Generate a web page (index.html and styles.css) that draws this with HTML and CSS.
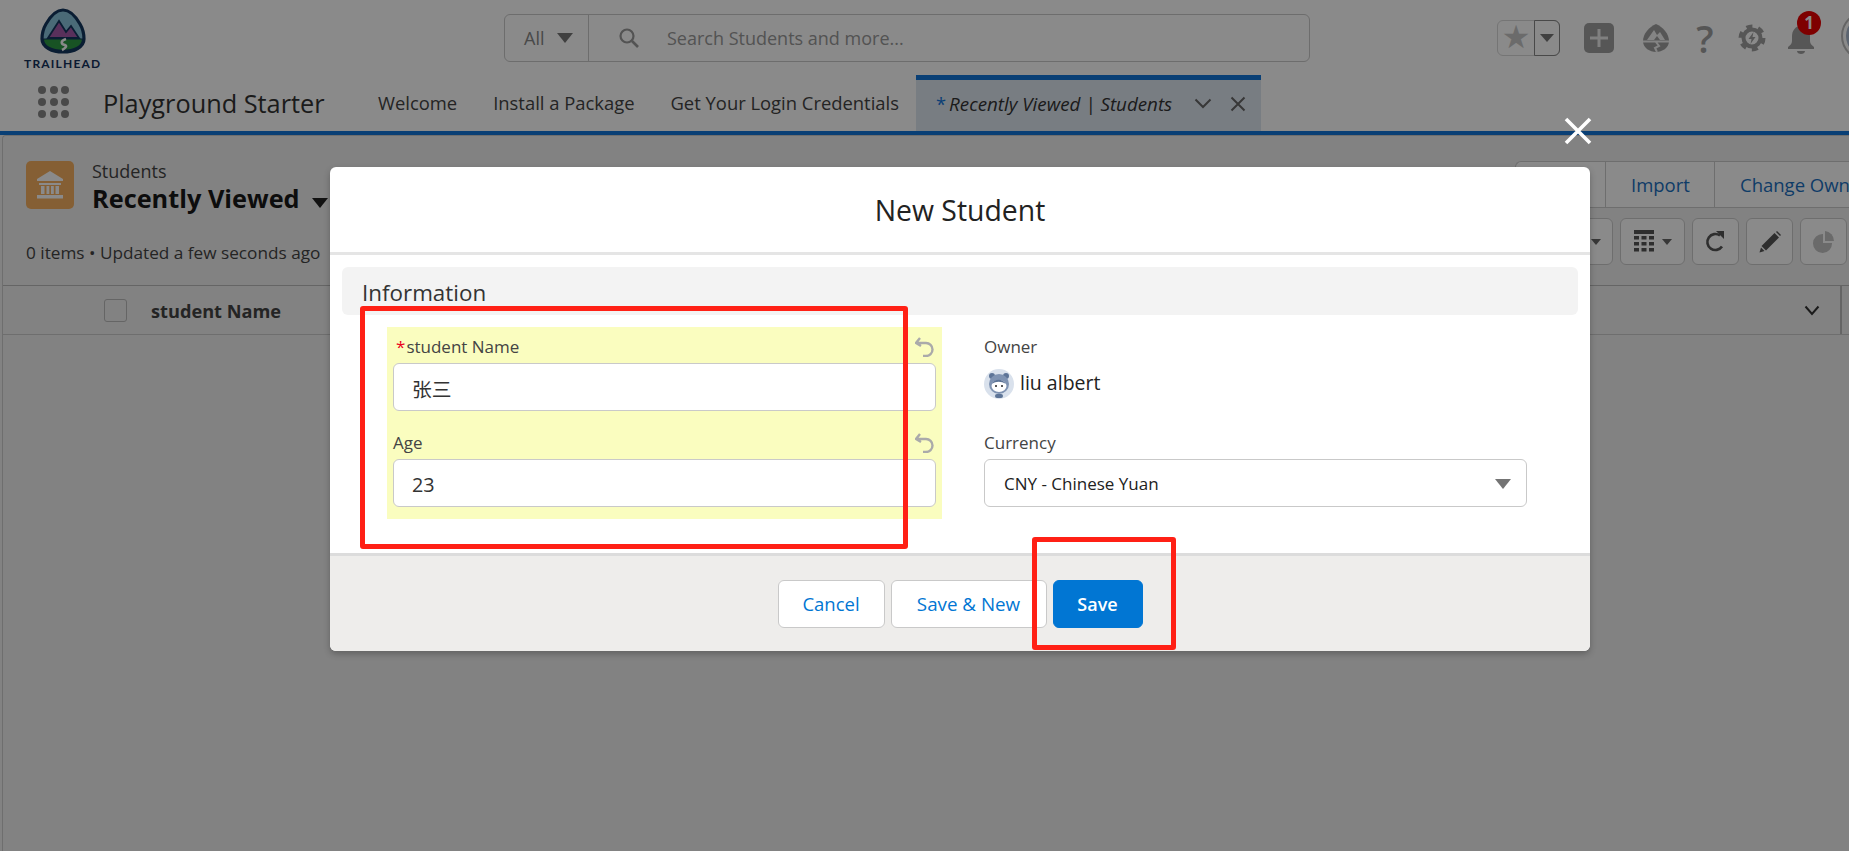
FILE: index.html
```html
<!DOCTYPE html>
<html lang="en">
<head>
  <meta charset="UTF-8">
  <title>New Student</title>
  <link rel="stylesheet" href="styles.css">
</head>
<body>
  <header class="topbar">
    <div class="logo">
      <svg width="46" height="46" viewBox="0 0 46 46">
        <path d="M23 2C30 2 36 9 40 16C43 21 44 26 44 31C44 39 34 44 23 44C12 44 2 39 2 31C2 26 3 21 6 16C10 9 16 2 23 2Z" fill="#8ac4dc" stroke="#14375e" stroke-width="3.200"/>
        <path d="M8 30L19 13L26 24L31 18L39 30Z" fill="#a45aa8" stroke="#14375e" stroke-width="1.800"/>
        <path d="M3.500 31H42.500C43 38 34 42.500 23 42.500C12 42.500 3 38 3.500 31Z" fill="#2e9a44" stroke="#14375e" stroke-width="1.200"/>
        <path d="M26 31C20 33 21 36 25 37C28 38 24 41 22 42" fill="none" stroke="#fff" stroke-width="2.600"/>
      </svg>
      <span class="logo-text">TRAILHEAD</span>
    </div>
    <div class="search">
      <div class="search-scope">All <span class="caret"></span></div>
      <svg class="search-icon" width="22" height="22" viewBox="0 0 22 22"><circle cx="9" cy="9" r="6.500" fill="none" stroke="#999" stroke-width="2.200"/><path d="M14 14L20 20" stroke="#999" stroke-width="2.600"/></svg>
      <span class="search-text">Search Students and more...</span>
    </div>
    <div class="global-actions">
      <div class="fav">
        <span class="fav-star">★</span>
        <span class="fav-menu"><span class="caret"></span></span>
      </div>
      <span class="add-btn">
        <svg width="20" height="20" viewBox="0 0 20 20"><path d="M10 1V19M1 10H19" stroke="#fff" stroke-width="3" opacity=".8"/></svg>
      </span>
      <svg class="g-trail" width="28" height="30" viewBox="0 0 28 30">
        <path d="M14 1C21 4 27 11 27 18C27 25 20 29 14 29C8 29 1 25 1 18C1 11 7 4 14 1Z" fill="#a0a0a0"/>
        <path d="M5 17L12 7L15 12L18 9L23 17H18L15 13L12 17Z" fill="#f4f4f4"/>
        <path d="M1 18.500H27M14 19L17 23L13 25L15 29" fill="none" stroke="#f4f4f4" stroke-width="2"/>
      </svg>
      <span class="g-help">?</span>
      <svg class="g-gear" width="28" height="28" viewBox="0 0 28 28">
        <circle cx="14" cy="14" r="11" fill="none" stroke="#a0a0a0" stroke-width="5" stroke-dasharray="5.800 5.720"/>
        <circle cx="14" cy="14" r="8.500" fill="none" stroke="#a0a0a0" stroke-width="4"/>
        <path d="M15.500 8L10.500 15H13.500L12.500 20L17.500 13H14.500Z" fill="#a0a0a0"/>
      </svg>
      <span class="g-bell">
        <svg width="30" height="30" viewBox="0 0 30 30"><path d="M15 2C9 2 6 7 6 12V17C6 20 4 21 2 23V25H28V23C26 21 24 20 24 17V12C24 7 21 2 15 2Z" fill="#a0a0a0"/><path d="M11 27H19C19 29 17 30 15 30C13 30 11 29 11 27Z" fill="#a0a0a0"/></svg>
        <span class="badge">1</span>
      </span>
      <span class="g-avatar"><span class="g-avatar-img"></span></span>
    </div>
  </header>

  <nav class="navbar">
    <div class="waffle">
      <i></i><i></i><i></i><i></i><i></i><i></i><i></i><i></i><i></i>
    </div>
    <div class="app-name">Playground Starter</div>
    <a class="tab">Welcome</a>
    <a class="tab">Install a Package</a>
    <a class="tab">Get Your Login Credentials</a>
    <div class="tab tab-active">
      <span class="tab-mark">*</span>
      <em class="tab-label">Recently Viewed | Students</em>
      <svg width="18" height="11" viewBox="0 0 18 11"><path d="M1.500 1.500L9 9L16.500 1.500" fill="none" stroke="#666" stroke-width="2"/></svg>
      <svg width="16" height="16" viewBox="0 0 16 16"><path d="M1.500 1.500L14.500 14.500M14.500 1.500L1.500 14.500" stroke="#666" stroke-width="2"/></svg>
    </div>
  </nav>

  <main class="panel">
    <div class="list-head">
      <span class="object-icon">
        <svg width="32" height="32" viewBox="0 0 32 32" fill="#fff"><path d="M16 2L29 10V12H3V10Z"/><rect x="5" y="14" width="22" height="2"/><rect x="7" y="17" width="3.500" height="8"/><rect x="12.500" y="17" width="2.800" height="8"/><rect x="17" y="17" width="2.800" height="8"/><rect x="21.500" y="17" width="3.500" height="8"/><rect x="3" y="26" width="26" height="3.500"/></svg>
      </span>
      <div class="list-title">
        <div class="object-name">Students</div>
        <div class="view-name">Recently Viewed <span class="caret caret-dark"></span></div>
      </div>
      <div class="btn-group">
        <a class="group-btn group-new">New</a>
        <a class="group-btn group-import">Import</a>
        <a class="group-btn">Change Owner</a>
      </div>
    </div>

    <div class="list-tools">
      <span class="list-meta">0 items • Updated a few seconds ago</span>
      <div class="tool-row">
        <span class="tool tool-wide tool-settings"><span class="caret caret-small"></span></span>
        <span class="tool tool-wide">
          <svg width="20" height="24" viewBox="0 0 20 24" fill="#555"><rect width="20" height="4"/><rect y="6" width="5" height="3.500"/><rect x="7.500" y="6" width="5" height="3.500"/><rect x="15" y="6" width="5" height="3.500"/><rect y="12" width="5" height="3.500"/><rect x="7.500" y="12" width="5" height="3.500"/><rect x="15" y="12" width="5" height="3.500"/><rect y="18" width="5" height="3.500"/><rect x="7.500" y="18" width="5" height="3.500"/><rect x="15" y="18" width="5" height="3.500"/></svg>
          <span class="caret caret-small"></span>
        </span>
        <span class="tool">
          <svg width="22" height="22" viewBox="0 0 22 22"><path d="M17 15.500A8 8 0 1 1 15 4.500" fill="none" stroke="#555" stroke-width="2.600"/><path d="M11 0H19V8Z" fill="#555"/></svg>
        </span>
        <span class="tool">
          <svg width="22" height="22" viewBox="0 0 22 22" fill="#555"><path d="M15.500 2L20 6.500L7 19.500L2.500 15Z"/><path d="M2 16.500L5.500 20L0.500 21.500Z"/><path d="M17 1L18 0L22 4L21 5Z"/></svg>
        </span>
        <span class="tool">
          <svg width="22" height="22" viewBox="0 0 22 22"><path d="M10 3V12H19A9.500 9.500 0 1 1 10 3Z" fill="#c4c4c4"/><path d="M12 0A10 10 0 0 1 21 10H12Z" fill="#c4c4c4"/></svg>
        </span>
      </div>
    </div>

    <div class="table-head">
      <span class="check"></span>
      <span class="col-name">student Name</span>
      <svg class="col-chevron" width="16" height="11" viewBox="0 0 16 11"><path d="M1.500 1.500L8 9L14.500 1.500" fill="none" stroke="#333" stroke-width="2"/></svg>
      <span class="col-edge"></span>
    </div>
  </main>

  <div class="backdrop"></div>

  <svg class="modal-close" width="28" height="28" viewBox="0 0 28 28"><path d="M2 2L26 26M26 2L2 26" stroke="#fff" stroke-width="3.600"/></svg>

  <section class="modal">
    <div class="modal-head">New Student</div>
    <div class="modal-body">
      <div class="section-title">Information</div>
      <div class="form">
        <div class="form-col form-changed">
          <div class="field-label">
            <span class="label-req"><span class="req">*</span>student Name</span>
            <svg class="undo" width="20" height="20" viewBox="0 0 20 20"><path d="M5 1L1 6L6 9M2 6H11A6.500 6.500 0 0 1 11 19H8" fill="none" stroke="#aaa" stroke-width="2.400"/></svg>
          </div>
          <input class="text-input" type="text" value="张三">
          <div class="field-label field-next">
            <span>Age</span>
            <svg class="undo" width="20" height="20" viewBox="0 0 20 20"><path d="M5 1L1 6L6 9M2 6H11A6.500 6.500 0 0 1 11 19H8" fill="none" stroke="#aaa" stroke-width="2.400"/></svg>
          </div>
          <input class="text-input" type="text" value="23">
        </div>
        <div class="form-col">
          <div class="field-label">Owner</div>
          <div class="owner">
            <svg width="30" height="30" viewBox="0 0 30 30">
              <circle cx="15" cy="15" r="15" fill="#d9e1ec"/>
              <circle cx="8" cy="7" r="3" fill="#5d7497"/><circle cx="22" cy="7" r="3" fill="#5d7497"/>
              <circle cx="15" cy="15" r="10" fill="#7f93b2"/>
              <ellipse cx="15" cy="17" rx="7.500" ry="6" fill="#fff"/>
              <path d="M8 15C10 10 18 9 22 15C17 12 12 12 8 15Z" fill="#5d7497"/>
              <circle cx="12" cy="17" r="1" fill="#222"/><circle cx="18" cy="17" r="1" fill="#222"/>
              <rect x="11" y="25" width="8" height="4" rx="2" fill="#5d7497"/>
            </svg>
            <span>liu albert</span>
          </div>
          <div class="field-label field-currency">Currency</div>
          <div class="select-box">
            <span>CNY - Chinese Yuan</span>
            <span class="select-arrow"></span>
          </div>
        </div>
      </div>
    </div>
    <div class="modal-foot">
      <button class="btn btn-cancel" type="button">Cancel</button>
      <button class="btn btn-new" type="button">Save &amp; New</button>
      <button class="btn btn-brand" type="button">Save</button>
    </div>
  </section>

  <div class="mark mark-form"></div>
  <div class="mark mark-save"></div>
</body>
</html>
```

FILE: styles.css
```css
* {
  box-sizing: border-box;
}
html, body {
  height: 851px;
}
body {
  margin: 0;
  overflow: hidden;
  position: relative;
  background: #f1f1f1;
  font-family: "Open Sans", "Noto Sans CJK SC", sans-serif;
  font-size: 17px;
  color: #333;
}

/* triangles used all over the page */
.caret {
  display: inline-block;
  width: 0;
  height: 0;
  border-left: 8px solid transparent;
  border-right: 8px solid transparent;
  border-top: 10px solid #777;
}
.caret-dark {
  border-top-color: #222;
  margin-left: 6px;
}
.caret-small {
  border-left-width: 5px;
  border-right-width: 5px;
  border-top: 6px solid #666;
}

/* top bar */
.topbar {
  height: 70px;
  background: #fff;
  display: flex;
  align-items: flex-start;
}
.logo {
  width: 504px;
  padding: 8px 0 0 24px;
  flex: none;
}
.logo svg {
  display: block;
  margin-left: 16px;
}
.logo-text {
  display: block;
  width: 80px;
  margin-top: 3px;
  font-size: 12px;
  line-height: 14px;
  font-weight: 700;
  letter-spacing: 1.200px;
  color: #16325c;
  font-family: "Lato", sans-serif;
}
.search {
  width: 806px;
  height: 48px;
  margin-top: 14px;
  border: 1px solid #c9c9c9;
  border-radius: 6px;
  display: flex;
  align-items: center;
  flex: none;
}
.search-scope {
  width: 84px;
  height: 100%;
  padding-left: 19px;
  border-right: 1px solid #c9c9c9;
  display: flex;
  align-items: center;
  gap: 13px;
  color: #888;
  font-size: 18px;
}
.search-icon {
  margin-left: 29px;
}
.search-text {
  margin-left: 27px;
  color: #999;
  font-size: 18px;
}
.global-actions {
  margin-left: 187px;
  height: 70px;
  display: flex;
  align-items: flex-start;
  flex: none;
}
.fav {
  width: 63px;
  height: 36px;
  margin-top: 20px;
  border: 1px solid #d8d8d8;
  border-radius: 6px;
  display: flex;
}
.fav-star {
  width: 36px;
  text-align: center;
  color: #c6c6c6;
  font-size: 32px;
  line-height: 32px;
  font-family: "DejaVu Sans", sans-serif;
}
.fav-menu {
  flex: 1;
  margin: -1px -1px -1px 0;
  border: 1px solid #888;
  border-radius: 0 6px 6px 0;
  display: flex;
  align-items: center;
  justify-content: center;
}
.fav-menu .caret {
  border-left-width: 7px;
  border-right-width: 7px;
  border-top-width: 8px;
  border-top-color: #777;
}
.add-btn {
  width: 30px;
  height: 30px;
  margin: 23px 0 0 24px;
  background: #a0a0a0;
  border-radius: 5px;
  display: flex;
  align-items: center;
  justify-content: center;
}
.g-trail {
  margin: 23px 0 0 28px;
}
.g-help {
  width: 24px;
  margin: 15px 0 0 23px;
  text-align: center;
  font-size: 38px;
  line-height: 46px;
  font-weight: 600;
  color: #a0a0a0;
}
.g-gear {
  margin: 24px 0 0 21px;
}
.g-bell {
  position: relative;
  margin: 24px 0 0 20px;
  width: 30px;
}
.badge {
  position: absolute;
  left: 11px;
  top: -13px;
  width: 24px;
  height: 24px;
  border-radius: 50%;
  background: #e90000;
  color: #fff;
  font-size: 17px;
  font-weight: 700;
  line-height: 24px;
  text-align: center;
}
.g-avatar {
  width: 50px;
  height: 50px;
  margin: 11px 0 0 25px;
  padding: 3px;
  border: 2px solid #bbb;
  border-radius: 50%;
  flex: none;
}
.g-avatar-img {
  display: block;
  height: 100%;
  background: #a9b9cf;
  border-radius: 50%;
}

/* navigation */
.navbar {
  height: 65px;
  padding-top: 5px;
  background: #fff;
  border-bottom: 4px solid #1275d9;
  display: flex;
  align-items: stretch;
}
.waffle {
  width: 31px;
  height: 32px;
  margin: 11px 0 0 38px;
  display: grid;
  grid-template-columns: repeat(3, 8px);
  grid-template-rows: repeat(3, 8px);
  justify-content: space-between;
  align-content: space-between;
}
.waffle i {
  background: #888;
  border-radius: 50%;
}
.app-name {
  width: 257px;
  margin-left: 34px;
  font-size: 25.300px;
  line-height: 56px;
  color: #333;
  white-space: nowrap;
}
.tab {
  padding: 0 18px;
  line-height: 56px;
  font-size: 18.400px;
  color: #444;
  white-space: nowrap;
  flex: none;
}
.tab-active {
  width: 345px;
  margin-left: -1px;
  padding: 0 0 4px 20px;
  background: #dee7f1;
  border-top: 5px solid #1275d9;
  display: flex;
  align-items: center;
  color: #333;
  line-height: 46px;
}
.tab-mark {
  color: #1275d9;
  margin-right: 3px;
}
.tab-label {
  width: 245px;
  white-space: nowrap;
  font-size: 18.800px;
}
.tab-active svg + svg {
  margin-left: 18px;
}

/* list view behind the modal */
.panel {
  height: 716px;
  margin-left: 2px;
  background: #f1f1f1;
  border-top: 1px solid #ccc;
  border-left: 1px solid #ccc;
  border-top-left-radius: 4px;
}
.list-head {
  height: 72px;
  display: flex;
  align-items: flex-start;
  padding: 25px 0 0 23px;
}
.object-icon {
  width: 48px;
  height: 48px;
  background: #f5b060;
  border-radius: 5px;
  display: flex;
  align-items: center;
  justify-content: center;
  flex: none;
}
.list-title {
  margin-left: 18px;
}
.object-name {
  font-size: 18px;
  line-height: 20px;
  color: #444;
}
.view-name {
  margin-top: 1px;
  font-size: 25.300px;
  line-height: 32px;
  font-weight: 700;
  color: #181818;
  white-space: nowrap;
}
.btn-group {
  margin-left: auto;
  width: 334px;
  height: 47px;
  border: 1px solid #ccc;
  border-right: 0;
  border-radius: 6px 0 0 0;
  background: #fff;
  display: flex;
  flex: none;
  white-space: nowrap;
}
.group-btn {
  padding-left: 25px;
  line-height: 45px;
  font-size: 18.500px;
  color: #1b6fbf;
  flex: none;
}
.group-new {
  width: 90px;
  border-right: 1px solid #ccc;
}
.group-import {
  width: 109px;
  border-right: 1px solid #ccc;
}
.list-tools {
  height: 47px;
  margin-top: 10px;
  padding: 0 2px 0 23px;
  display: flex;
  align-items: flex-end;
  justify-content: space-between;
}
.list-meta {
  margin-bottom: 2px;
  font-size: 17.200px;
  line-height: 20px;
  color: #444;
}
.tool-row {
  display: flex;
  gap: 7px;
}
.tool {
  width: 47px;
  height: 47px;
  background: #fff;
  border: 1px solid #ccc;
  border-radius: 6px;
  display: flex;
  align-items: center;
  justify-content: center;
  gap: 8px;
}
.tool-wide {
  width: 65px;
}
.tool-settings {
  justify-content: flex-end;
  padding-right: 11px;
}
.table-head {
  height: 50px;
  margin-top: 20px;
  padding-left: 101px;
  background: #f1f1f1;
  border-top: 1px solid #bbb;
  border-bottom: 1px solid #ccc;
  display: flex;
  align-items: center;
  position: relative;
}
.check {
  width: 23px;
  height: 23px;
  background: #f1f1f1;
  border: 1px solid #bbb;
  border-radius: 3px;
}
.col-name {
  margin: 2px 0 0 24px;
  font-weight: 700;
  font-size: 18.200px;
  color: #444;
}
.col-chevron {
  margin-left: auto;
  margin-right: 20px;
}
.col-edge {
  width: 2px;
  height: 48px;
  margin-right: 7px;
  background: #bbb;
}

/* modal */
.backdrop {
  position: absolute;
  inset: 0;
  background: rgba(0, 0, 0, 0.46);
}
.modal-close {
  position: absolute;
  left: 1564px;
  top: 117px;
}
.modal {
  position: absolute;
  left: 330px;
  top: 167px;
  width: 1260px;
  height: 484px;
  background: #fff;
  border-radius: 6px;
  box-shadow: 0 3px 6px rgba(0, 0, 0, 0.25);
  display: flex;
  flex-direction: column;
}
.modal-head {
  height: 88px;
  border-bottom: 3px solid #e5e5e5;
  text-align: center;
  font-size: 28.400px;
  line-height: 86px;
  color: #222;
}
.modal-body {
  flex: 1;
  padding: 12px 12px 0;
}
.section-title {
  height: 48px;
  padding-left: 20px;
  background: #f3f3f3;
  border-radius: 6px;
  font-size: 22.400px;
  line-height: 52px;
  color: #333;
}
.form {
  padding: 12px 0 0 45px;
  display: grid;
  grid-template-columns: 555px 543px;
  column-gap: 42px;
}
.form-col {
  height: 192px;
  padding-top: 10px;
}
.form-changed {
  padding: 10px 6px 0;
  background: #fafdbf;
}
.field-label {
  height: 20px;
  display: flex;
  justify-content: space-between;
  align-items: center;
  line-height: 20px;
  color: #444;
}
.field-next {
  margin-top: 22px;
}
.field-currency {
  margin-top: 34px;
}
.label-req {
  padding-left: 3px;
}
.req {
  color: #ea001e;
  margin-right: 1px;
}
.undo {
  margin-right: 1px;
}
.text-input {
  display: block;
  width: 100%;
  height: 48px;
  margin-top: 6px;
  padding: 2px 18px 0;
  background: #fff;
  border: 1px solid #c9c9c9;
  border-radius: 6px;
  font: inherit;
  font-size: 19.800px;
  color: #333;
}
.owner {
  height: 30px;
  margin-top: 12px;
  display: flex;
  align-items: center;
  gap: 6px;
  font-size: 19.500px;
  color: #222;
}
.owner span {
  margin-top: -4px;
}
.select-box {
  height: 48px;
  margin-top: 6px;
  padding: 1px 15px 0 19px;
  border: 1px solid #c9c9c9;
  border-radius: 6px;
  display: flex;
  align-items: center;
  justify-content: space-between;
  font-size: 17px;
  color: #222;
}
.select-arrow {
  width: 0;
  height: 0;
  border-left: 8px solid transparent;
  border-right: 8px solid transparent;
  border-top: 10px solid #747474;
}
.modal-foot {
  height: 98px;
  background: #eeedeb;
  border-top: 3px solid #dcdcdc;
  border-radius: 0 0 6px 6px;
  display: flex;
  justify-content: center;
  align-items: center;
  gap: 6px;
}
.btn {
  height: 48px;
  background: #fff;
  border: 1px solid #c9c9c9;
  border-radius: 6px;
  font: inherit;
  font-size: 18.500px;
  color: #0176d3;
}
.btn-cancel {
  width: 107px;
}
.btn-new {
  width: 156px;
  font-size: 18.800px;
  padding: 0;
}
.btn-brand {
  width: 90px;
  padding: 0;
  background: #0176d3;
  border-color: #0176d3;
  color: #fff;
  font-size: 18px;
  font-weight: 600;
}

/* red annotations drawn on top of the screenshot */
.mark {
  position: absolute;
  border: 5px solid #ff2015;
  border-radius: 3px;
}
.mark-form {
  left: 360px;
  top: 306px;
  width: 548px;
  height: 243px;
}
.mark-save {
  left: 1032px;
  top: 537px;
  width: 144px;
  height: 113px;
}
```
